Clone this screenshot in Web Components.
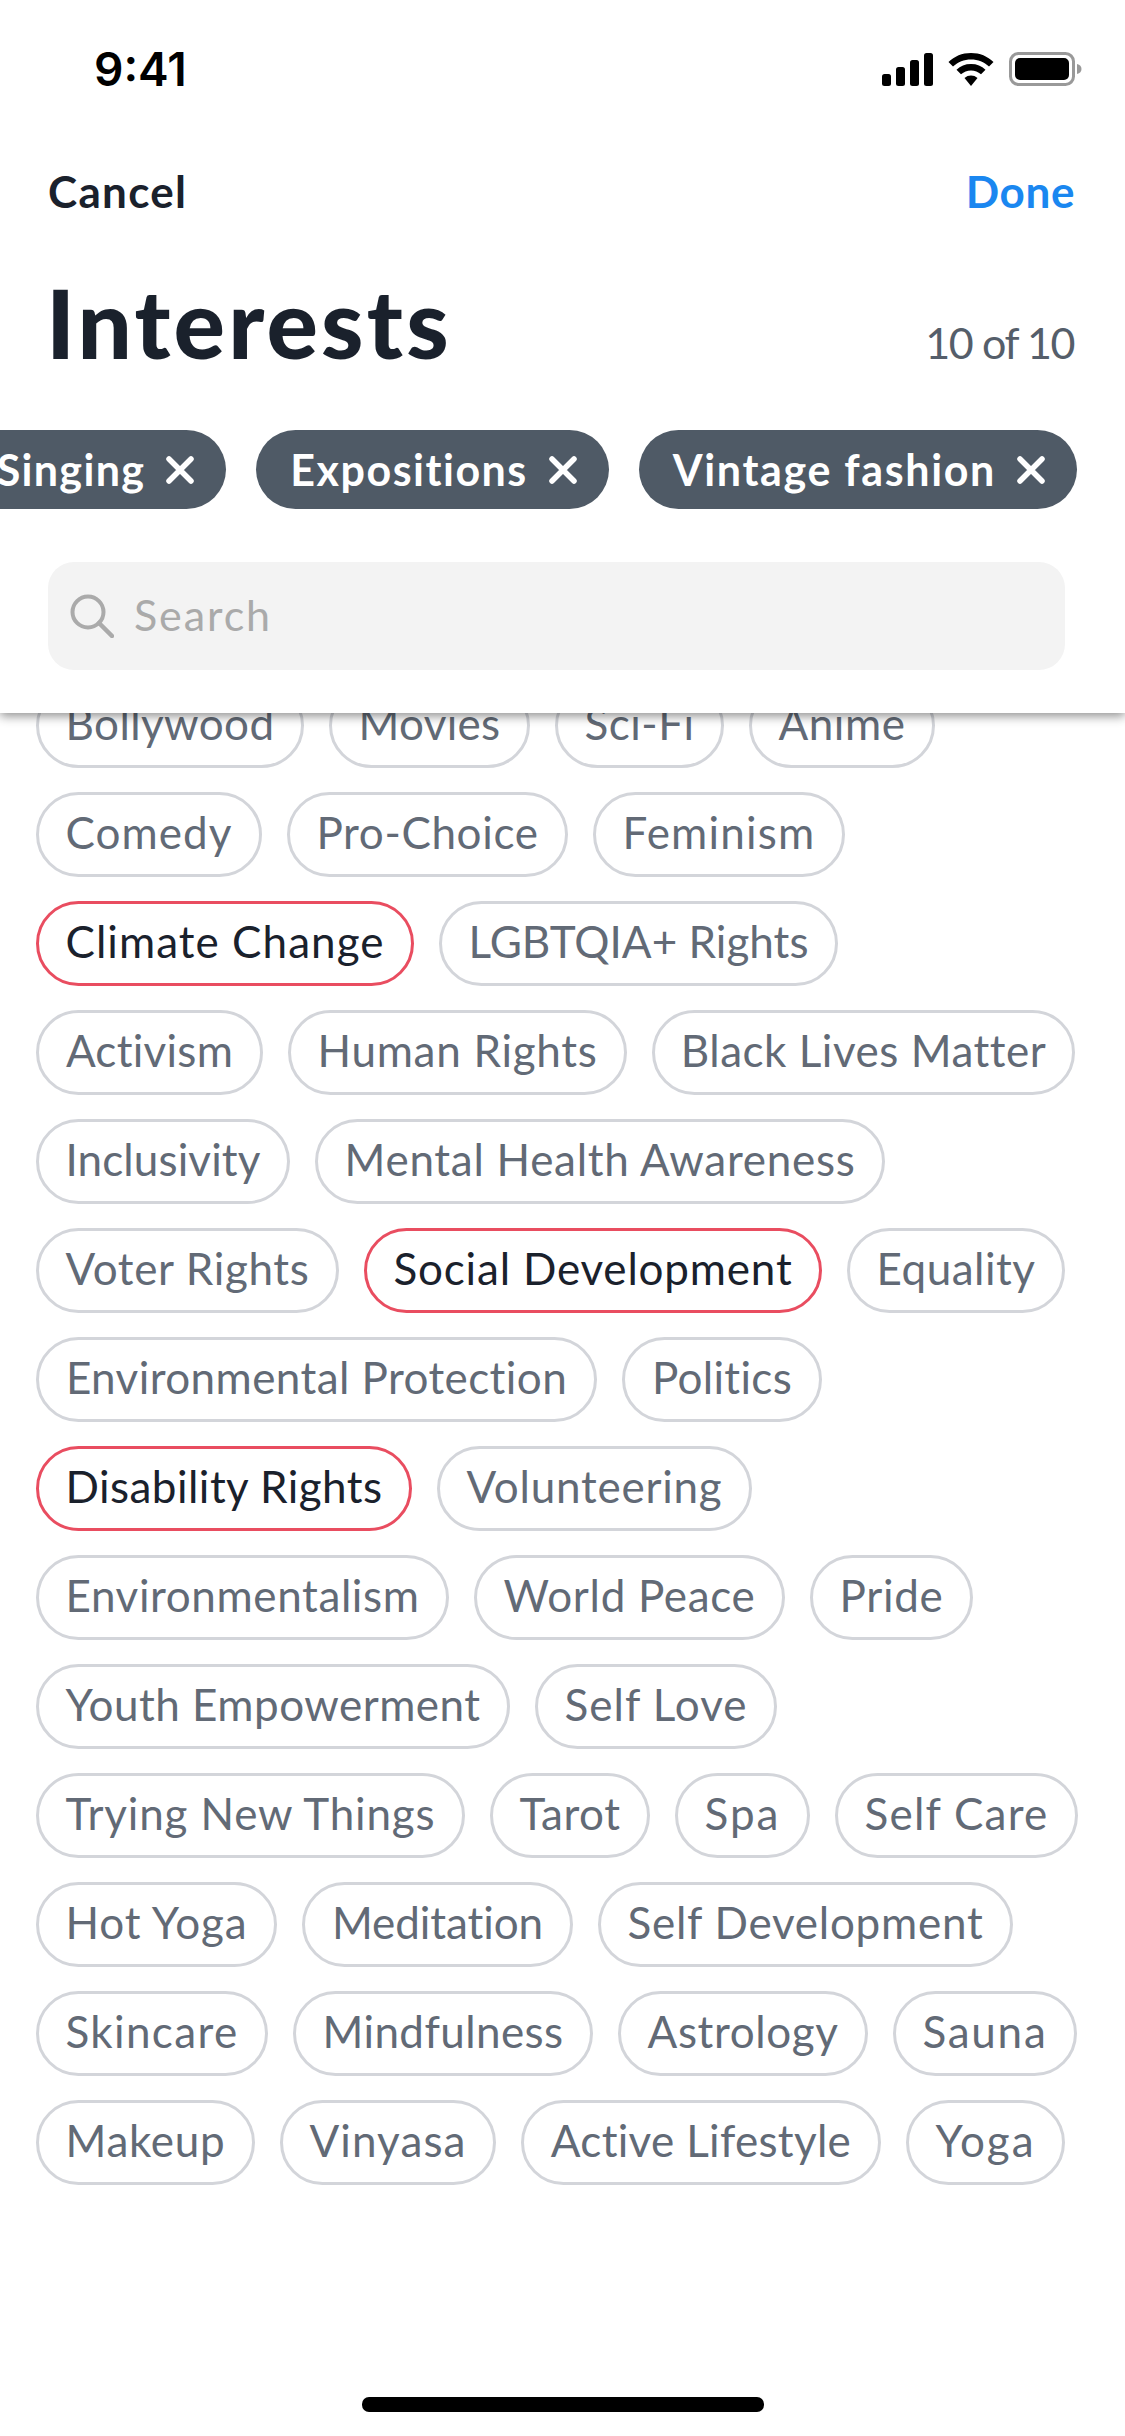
<!doctype html>
<html>
<head>
<meta charset="utf-8">
<title>Interests</title>
<style>
  html, body { margin: 0; background: #fff; }
  body { width: 1125px; height: 2436px; overflow: hidden; font-family: Lato, "Open Sans", sans-serif; }
</style>
</head>
<body>
<interests-screen>
  <status-bar slot="top"></status-bar>
  <nav-row slot="top"></nav-row>
  <title-row slot="top" count="10 of 10">Interests</title-row>
  <picked-row slot="top">
    <picked-chip>Singing</picked-chip>
    <picked-chip style="letter-spacing: 1.5px">Expositions</picked-chip>
    <picked-chip style="letter-spacing: 1.65px">Vintage fashion</picked-chip>
  </picked-row>
  <search-box slot="top" placeholder="Search"></search-box>

  <interest-chip w="268">Bollywood</interest-chip>
  <interest-chip w="201">Movies</interest-chip>
  <interest-chip w="169">Sci-Fi</interest-chip>
  <interest-chip w="186">Anime</interest-chip>
  <interest-chip w="226">Comedy</interest-chip>
  <interest-chip w="281">Pro-Choice</interest-chip>
  <interest-chip w="252">Feminism</interest-chip>
  <interest-chip w="378" selected>Climate Change</interest-chip>
  <interest-chip w="399">LGBTQIA+ Rights</interest-chip>
  <interest-chip w="227">Activism</interest-chip>
  <interest-chip w="339">Human Rights</interest-chip>
  <interest-chip w="423">Black Lives Matter</interest-chip>
  <interest-chip w="254">Inclusivity</interest-chip>
  <interest-chip w="570">Mental Health Awareness</interest-chip>
  <interest-chip w="303">Voter Rights</interest-chip>
  <interest-chip w="458" selected>Social Development</interest-chip>
  <interest-chip w="218">Equality</interest-chip>
  <interest-chip w="561">Environmental Protection</interest-chip>
  <interest-chip w="200">Politics</interest-chip>
  <interest-chip w="376" selected>Disability Rights</interest-chip>
  <interest-chip w="315">Volunteering</interest-chip>
  <interest-chip w="413">Environmentalism</interest-chip>
  <interest-chip w="311">World Peace</interest-chip>
  <interest-chip w="163">Pride</interest-chip>
  <interest-chip w="474">Youth Empowerment</interest-chip>
  <interest-chip w="242">Self Love</interest-chip>
  <interest-chip w="429">Trying New Things</interest-chip>
  <interest-chip w="160">Tarot</interest-chip>
  <interest-chip w="135">Spa</interest-chip>
  <interest-chip w="243">Self Care</interest-chip>
  <interest-chip w="241">Hot Yoga</interest-chip>
  <interest-chip w="271">Meditation</interest-chip>
  <interest-chip w="415">Self Development</interest-chip>
  <interest-chip w="232">Skincare</interest-chip>
  <interest-chip w="300">Mindfulness</interest-chip>
  <interest-chip w="250">Astrology</interest-chip>
  <interest-chip w="184">Sauna</interest-chip>
  <interest-chip w="219">Makeup</interest-chip>
  <interest-chip w="216">Vinyasa</interest-chip>
  <interest-chip w="360">Active Lifestyle</interest-chip>
  <interest-chip w="159">Yoga</interest-chip>
</interests-screen>

<script>
class InterestsScreen extends HTMLElement {
  constructor() {
    super();
    this.attachShadow({ mode: 'open' }).innerHTML = `
      <style>
        :host { display: flex; flex-direction: column; height: 2436px; background: #fff; }
        header {
          display: flex; flex-direction: column; height: 713px; flex: none;
          background: #fff; box-shadow: 0 3px 10px rgba(0,0,0,.45);
          position: relative; z-index: 2;
        }
        main { flex: 1; display: flex; flex-wrap: wrap; align-content: flex-start; gap: 24px 25px; padding: 0 38px 0 36px; margin-top: -30px; }
        .home { flex: none; align-self: center; width: 402px; height: 15px; border-radius: 7px; background: #000; margin-bottom: 24px; }
      </style>
      <header><slot name="top"></slot></header>
      <main><slot></slot></main>
      <div class="home"></div>
    `;
  }
}

class StatusBar extends HTMLElement {
  constructor() {
    super();
    this.attachShadow({ mode: 'open' }).innerHTML = `
      <style>
        :host { display: flex; align-items: center; justify-content: space-between; height: 46px; margin-top: 46px; padding: 0 43px 0 94px; font: 600 46px Inter, sans-serif; color: #000; }
        .icons { display: flex; align-items: center; gap: 15px; }
        svg { display: block; }
      </style>
      <span>9:41</span>
      <div class="icons">
        <svg width="51" height="33" viewBox="0 0 51 33"><rect x="0" y="21" width="9" height="12" rx="2.5"/><rect x="14" y="14" width="9" height="19" rx="2.5"/><rect x="28" y="7" width="9" height="26" rx="2.5"/><rect x="42" y="0" width="9" height="33" rx="2.5"/></svg>
        <svg width="46" height="33" viewBox="0 0 46 33"><path d="M23 0C14 0 6.500 3.300 0.500 9L5 13.500C10 9 16 6.500 23 6.500S36 9 41 13.500L45.500 9C39.500 3.300 32 0 23 0Z"/><path d="M23 11C17 11 12.500 13 8.500 16.800L13 21.300C16 18.800 19 17.500 23 17.500S30 18.800 33 21.300L37.500 16.800C33.500 13 29 11 23 11Z"/><path d="M23 22.500C20.500 22.500 18.500 23.300 16.500 25L23 33L29.500 25C27.500 23.300 25.500 22.500 23 22.500Z"/></svg>
        <svg width="73" height="34" viewBox="0 0 73 34"><rect x="1.500" y="1.500" width="63" height="31" rx="8" fill="none" stroke="#999" stroke-width="3"/><rect x="6" y="6" width="54" height="22" rx="5"/><path d="M68 12C71 12.800 72.500 14.500 72.500 17S71 21.200 68 22Z" fill="#999"/></svg>
      </div>
    `;
  }
}

class NavRow extends HTMLElement {
  constructor() {
    super();
    this.attachShadow({ mode: 'open' }).innerHTML = `
      <style>
        :host { display: flex; justify-content: space-between; align-items: center; margin-top: 73px; padding: 0 50px 0 48px; font-size: 44px; font-weight: 700; line-height: 52px; }
        .cancel { color: #1a212c; letter-spacing: 1.3px; }
        .done { color: #1a87f0; letter-spacing: .6px; }
      </style>
      <span class="cancel">Cancel</span>
      <span class="done">Done</span>
    `;
  }
}

class TitleRow extends HTMLElement {
  constructor() {
    super();
    const count = this.getAttribute('count') || '';
    this.attachShadow({ mode: 'open' }).innerHTML = `
      <style>
        :host { display: flex; justify-content: space-between; align-items: baseline; margin-top: 50px; padding: 0 51px 0 46px; color: #1a212c; }
        h1 { margin: 0; font-size: 96px; font-weight: 900; line-height: 110px; letter-spacing: 3.2px; }
        span { font-size: 43px; color: #555e6a; letter-spacing: -1.4px; }
      </style>
      <h1><slot></slot></h1>
      <span>${count}</span>
    `;
  }
}

class PickedRow extends HTMLElement {
  constructor() {
    super();
    this.attachShadow({ mode: 'open' }).innerHTML = `
      <style>
        :host { display: flex; justify-content: flex-end; gap: 30px; margin-top: 53px; padding-right: 48px; overflow: hidden; }
      </style>
      <slot></slot>
    `;
  }
}

class PickedChip extends HTMLElement {
  constructor() {
    super();
    this.attachShadow({ mode: 'open' }).innerHTML = `
      <style>
        :host { display: flex; flex: none; align-items: center; gap: 21px; height: 79px; padding: 0 32px 0 34px; border-radius: 40px; background: #4f5a66; color: #fff; font-size: 43px; font-weight: 700; letter-spacing: 1.35px; white-space: nowrap; }
        svg { display: block; }
      </style>
      <slot></slot>
      <svg width="28" height="28" viewBox="0 0 28 28"><path d="M3 3L25 25M25 3L3 25" stroke="#fff" stroke-width="5.500" stroke-linecap="round"/></svg>
    `;
  }
}

class SearchBox extends HTMLElement {
  constructor() {
    super();
    const placeholder = this.getAttribute('placeholder') || '';
    this.attachShadow({ mode: 'open' }).innerHTML = `
      <style>
        :host { display: flex; align-items: center; gap: 20px; height: 108px; margin: 53px 60px 0 48px; padding: 0 22px; border-radius: 26px; background: #f3f3f3; color: #aaa; font-size: 43px; letter-spacing: 1.9px; }
        svg { display: block; flex: none; }
        span { margin-bottom: 3px; }
      </style>
      <svg width="44" height="44" viewBox="0 0 44 44" fill="none" stroke="#aaa" stroke-width="4"><circle cx="18" cy="18" r="15.500"/><path d="M29 29L42 42" stroke-linecap="round" stroke-width="4.500"/></svg>
      <span>${placeholder}</span>
    `;
  }
}

class InterestChip extends HTMLElement {
  constructor() {
    super();
    this.attachShadow({ mode: 'open' }).innerHTML = `
      <style>
        :host { display: flex; align-items: center; justify-content: center; box-sizing: border-box; height: 85px; padding-bottom: 5px; border: 3px solid #d3d5da; border-radius: 43px; background: #fff; color: #626a76; font-size: 44px; white-space: nowrap; }
        :host([selected]) { border-color: #e94d60; color: #1a212c; }
      </style>
      <span class="label"><slot></slot></span>
    `;
  }

  // the reference font is not installed, so space the letters to fill the chip's measured width
  connectedCallback() {
    const w = Number(this.getAttribute('w'));
    this.style.width = w + 'px';
    const label = this.shadowRoot.querySelector('.label');
    const extra = w - 59 - label.getBoundingClientRect().width;
    label.style.letterSpacing = (extra / this.textContent.length).toFixed(2) + 'px';
  }
}

customElements.define('interests-screen', InterestsScreen);
customElements.define('status-bar', StatusBar);
customElements.define('nav-row', NavRow);
customElements.define('title-row', TitleRow);
customElements.define('picked-row', PickedRow);
customElements.define('picked-chip', PickedChip);
customElements.define('search-box', SearchBox);
customElements.define('interest-chip', InterestChip);
</script>
</body>
</html>
